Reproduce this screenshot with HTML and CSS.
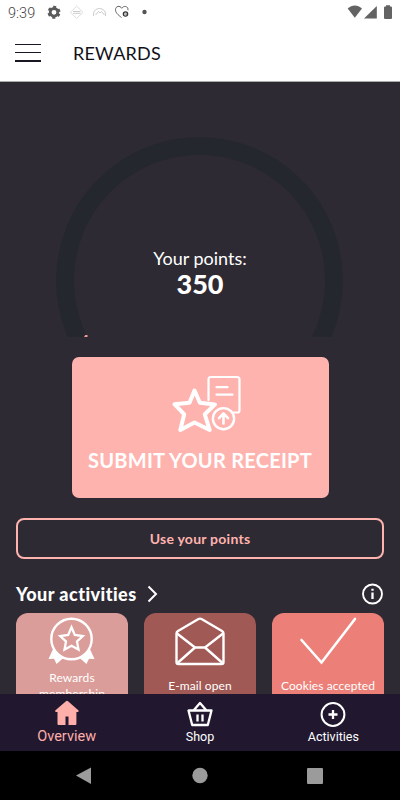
FILE: index.html
```html
<!DOCTYPE html>
<html lang="en">
<head>
    <meta charset="UTF-8">
    <meta name="viewport" content="width=device-width, initial-scale=1.0">
    <title>Rewards</title>
    <link rel="stylesheet" href="styles.css">
</head>
<body>
    <div class="status-bar">
        <span class="time">9:39</span>
        <svg class="notifications" width="106" height="24" viewBox="0 0 106 24" fill="none">
            <circle cx="10" cy="12.3" r="3.8" stroke="#5a5a5a" stroke-width="2.8"/>
            <circle cx="10" cy="12.3" r="5.500" stroke="#5a5a5a" stroke-width="2" stroke-dasharray="3 2.760" stroke-dashoffset="-1.400"/>
            <path d="M32.700 6.200 39 12.300 32.700 18.400 26.400 12.300Z" stroke="#ddd"/>
            <path d="M29 11.500h7.500M29 13.300h7.500" stroke="#ccc"/>
            <path d="M49.500 16v-2a6 5.500 0 0 1 12 0v2M51.500 15l3-3.500 1.500 1.500 1.500-1.500 3 3.500" stroke="#ccc"/>
            <path d="M77.500 17.500C74 15 71.500 12.500 71.500 9.800c0-4 4.500-4.500 6.300-1.500 1.800-3 6.700-2.500 6.200 2" stroke="#555" stroke-width=".9"/>
            <circle cx="81.500" cy="14" r="2.200" stroke="#333" stroke-width="1.200"/>
            <path d="M80 14h3v2" stroke="#555" stroke-width=".8"/>
            <circle cx="100.500" cy="12" r="2.200" fill="#555"/>
        </svg>
        <svg class="signals" width="46" height="24" viewBox="0 0 46 24" fill="#636363">
            <path d="M1.700 8.500C6 4.600 11.500 4.600 16 8.500L8.800 17.700Z"/>
            <path d="M18 18.500 30.800 6v12.500Z"/>
            <path d="M38 7.500q0-1 1-1h1V5.300h4v1.200h1q1 0 1 1V18q0 1-1 1h-6q-1 0-1-1Z"/>
        </svg>
    </div>
    <header>
        <button class="menu-button" aria-label="Menu">
            <span></span><span></span><span></span>
        </button>
        <h1>REWARDS</h1>
    </header>

    <main>
        <section class="points">
            <svg class="gauge" width="288" height="201" viewBox="0 0 288 201">
                <circle cx="143.500" cy="144.500" r="134.500" fill="none" stroke="#25272f" stroke-width="18"/>
                <path d="M28 201l1.200-2h2.300v2z" fill="#ef9a92"/>
            </svg>
            <div class="points-text">
                <span class="points-label">Your points:</span>
                <strong class="points-value">350</strong>
            </div>
        </section>

        <button class="submit-card">
            <svg width="72" height="60" viewBox="0 0 72 60" fill="none" stroke="#fff" stroke-linecap="round" stroke-linejoin="round">
                <path d="M37.500 26V5.500q0-2.500 2.500-2.500h26q2.500 0 2.500 2.500v31q0 2-2 2h-3.500" stroke-width="2.200"/>
                <path d="M45.500 13.200h11M45.500 20.700h16" stroke-width="2.200"/>
                <path d="M23.500 16.500 28.900 28.800 44 30.400 33.800 40.300 38.700 56 23.500 48.500 9.300 56 13.200 40.300 3.500 30.200 18.500 28.800Z" stroke-width="4"/>
                <circle cx="52.500" cy="44.700" r="10.600" stroke-width="2.400"/>
                <path d="M52.500 49.500v-9.500M48 44.200l4.500-4.800 4.500 4.800" stroke-width="2.600"/>
            </svg>
            <span>SUBMIT YOUR RECEIPT</span>
        </button>

        <button class="use-button"><span>Use your points</span></button>

        <div class="activities-header">
            <h2>Your activities</h2>
            <svg class="chevron" width="12" height="18" viewBox="0 0 12 18" fill="none" stroke="#fff" stroke-width="2">
                <path d="M1.500 1.500 9 9l-7.500 7.500"/>
            </svg>
            <svg class="info" width="22" height="22" viewBox="0 0 22 22" fill="none" stroke="#fff" stroke-width="1.900">
                <circle cx="10.500" cy="11" r="9.500"/>
                <path d="M10.500 9.500v6.500M10.500 5.800v2" stroke-width="2.300"/>
            </svg>
        </div>

        <div class="cards">
            <div class="card membership">
                <svg width="80" height="56" viewBox="0 0 80 56" fill="none" stroke="#fff">
                    <path d="M21.500 35 16.500 46l5.500-.2 2.500 5.200 8-7zM57.500 35 62.500 46l-5.500-.2-2.500 5.200-8-7z" fill="#fff" stroke="none"/>
                    <circle cx="39.500" cy="26" r="20.200" fill="#da9d99" stroke-width="2.400"/>
                    <path d="M39.500 14.200 42.800 22 50.800 23 45 28.500 46.500 36.500 39.500 32.800 32.500 36.500 34 28.500 28.200 23 36.200 22Z" stroke-width="2.300"/>
                </svg>
                <span>Rewards<br>membership</span>
            </div>
            <div class="card email">
                <svg width="80" height="56" viewBox="0 0 80 56" fill="none" stroke="#fff" stroke-width="2.400" stroke-linejoin="round">
                    <path d="M16.500 20.500Q16.500 19 18 18L38.500 6q1.500-.8 3 0L62 18q1.500 1 1.500 2.500V49q0 2-2 2h-43q-2 0-2-2Z"/>
                    <path d="M17 20.500 35 34.500h10L63 20.500M17.500 50 35 34.500M62.500 50 45 34.500"/>
                </svg>
                <span>E-mail open</span>
            </div>
            <div class="card cookies">
                <svg width="80" height="56" viewBox="0 0 80 56" fill="none" stroke="#fff" stroke-width="2.600" stroke-linecap="round">
                    <path d="M13.500 27 33.500 49.500 67 6"/>
                </svg>
                <span>Cookies accepted</span>
            </div>
        </div>
    </main>

    <nav>
        <a class="nav-item active">
            <svg width="28" height="28" viewBox="0 0 28 28" fill="#ffaea9">
                <path d="M14 .8q.5 0 1 .4L25.600 10.500q.5 1.200-.8 1.400H23.400V24q0 1-1 1H15.500v-8.500h-3V25H5.500q-1 0-1-1V11.900H3q-1.300-.2-.8-1.400L13 1.200q.5-.4 1-.4Z"/>
            </svg>
            <span>Overview</span>
        </a>
        <a class="nav-item">
            <svg width="28" height="28" viewBox="0 0 28 28" fill="none" stroke="#fff" stroke-width="2.300" stroke-linejoin="round">
                <path d="M2.500 10.500h23L21.800 25H6.200ZM7.500 10.500 14 3l6.500 7.500M11.500 14.500v7M16.500 14.500v7"/>
            </svg>
            <span>Shop</span>
        </a>
        <a class="nav-item">
            <svg width="28" height="28" viewBox="0 0 28 28" fill="none" stroke="#fff" stroke-width="2">
                <circle cx="14" cy="14.500" r="11.400"/>
                <path d="M14 10v9M9.500 14.500h9" stroke-width="2.300"/>
            </svg>
            <span>Activities</span>
        </a>
    </nav>
    <div class="system-bar">
        <svg width="400" height="49" viewBox="0 0 400 49" fill="#9b9b9b">
            <path d="M76 24.500 91 16.500v16.500Z"/>
            <circle cx="200" cy="24.500" r="7.700"/>
            <rect x="307" y="17" width="16" height="16" rx="1"/>
        </svg>
    </div>
</body>
</html>
```

FILE: styles.css
```css
* {
    box-sizing: border-box;
}
body {
    margin: 0;
    height: 800px;
    display: flex;
    flex-direction: column;
    overflow: hidden;
    font-family: Lato, "Liberation Sans", sans-serif;
    background-color: #2e2a34;
    color: white;
}
button {
    border: none;
    padding: 0;
    font-family: inherit;
    color: inherit;
    cursor: pointer;
}
svg {
    display: block;
    flex: none;
}
.status-bar {
    height: 24px;
    flex: none;
    display: flex;
    align-items: center;
    padding: 0 8px;
    background-color: white;
    color: #444;
}
.time {
    width: 36px;
    padding-top: 2px;
    font-family: Roboto, sans-serif;
    font-size: 14.5px;
    font-weight: 300;
}
.signals {
    margin-left: auto;
}
header {
    height: 58px;
    flex: none;
    display: flex;
    align-items: center;
    padding: 0 15px;
    background-color: white;
    border-bottom: 1px solid #aaa;
    color: #111018;
}
.menu-button {
    width: 26px;
    height: 18px;
    margin-right: 32px;
    display: flex;
    flex-direction: column;
    justify-content: space-between;
    background: none;
}
.menu-button span {
    width: 26px;
    height: 1.5px;
    background-color: #1a1724;
}
h1 {
    margin: 0;
    font-size: 18px;
    font-weight: 400;
    letter-spacing: 0.2px;
}
main {
    flex: 1;
    min-height: 0;
    overflow: hidden;
    padding: 54px 16px 0;
    display: flex;
    flex-direction: column;
}
.points {
    flex: none;
    height: 200px;
    display: grid;
    justify-items: center;
}
.gauge, .points-text {
    grid-area: 1 / 1;
}
.points-text {
    display: flex;
    flex-direction: column;
    align-items: center;
    padding-top: 110px;
}
.points-label {
    font-size: 18px;
    line-height: 24px;
}
.points-value {
    font-size: 27px;
    font-weight: 900;
    line-height: 27px;
}
.submit-card {
    flex: none;
    align-self: center;
    width: 257px;
    height: 141px;
    margin-top: 21px;
    padding-top: 17px;
    display: flex;
    flex-direction: column;
    align-items: center;
    border-radius: 7px;
    background-color: #ffb3ae;
    box-shadow: 0 0 1px #17202d;
    font-size: 20px;
    font-weight: 700;
    letter-spacing: 0.25px;
}
.submit-card svg {
    margin-left: 13px;
}
.submit-card span {
    margin-top: 14px;
    line-height: 24px;
    white-space: nowrap;
}
.use-button {
    flex: none;
    height: 41px;
    margin-top: 20px;
    border: 2px solid #ffb3ae;
    border-radius: 8px;
    background: none;
    color: #ffb3ae;
    font-size: 14px;
    font-weight: 700;
    letter-spacing: 0.25px;
}
.activities-header {
    flex: none;
    height: 36px;
    margin-top: 17px;
    margin-bottom: 1px;
    display: flex;
    align-items: center;
}
h2 {
    margin: 0;
    width: 131px;
    font-size: 18px;
    font-weight: 900;
    letter-spacing: 0.45px;
    white-space: nowrap;
}
.info {
    margin-left: auto;
}
.cards {
    flex: none;
    display: grid;
    grid-template-columns: repeat(3, 112px);
    gap: 16px;
}
.card {
    height: 112px;
    border-radius: 12px;
    display: flex;
    flex-direction: column;
    align-items: center;
    font-size: 12px;
    line-height: 16px;
    letter-spacing: 0.1px;
    text-align: center;
}
.card span {
    margin-top: 9px;
}
.membership {
    background-color: #da9d99;
}
.membership span {
    margin-top: 1px;
}
.email {
    background-color: #a15955;
}
.cookies {
    background-color: #ec7f78;
}
nav {
    flex: none;
    height: 57px;
    display: grid;
    grid-template-columns: repeat(3, 1fr);
    background-color: #211830;
}
.nav-item {
    display: flex;
    flex-direction: column;
    align-items: center;
    padding-top: 6px;
    font-family: Roboto, sans-serif;
    font-size: 12.5px;
    line-height: 18px;
}
.nav-item.active {
    color: #ffaea9;
    font-size: 14.5px;
}
.system-bar {
    flex: none;
    height: 49px;
    background-color: black;
}
```
